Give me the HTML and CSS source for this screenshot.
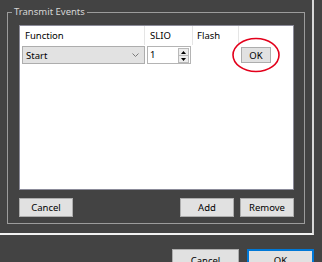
FILE: index.html
```html
<html>
<head>
    <title>Transmit Events</title>
    <link rel="stylesheet" href="styles.css">
</head>
<body>
    <div class="panel">
        <fieldset class="group">
            <legend>Transmit Events</legend>

            <!-- event list -->
            <div class="list">
                <div class="list-head">
                    <div class="col col-func">Function</div>
                    <div class="col col-slio">SLIO</div>
                    <div class="col col-flash">Flash</div>
                    <div class="col col-rest"></div>
                </div>
                <div class="list-row">
                    <div class="combo">
                        <span>Start</span>
                        <svg class="chevron" width="7" height="4" viewBox="0 0 7 4"><polyline points="0.5,0.5 3.5,3.5 6.5,0.5" fill="none" stroke="#7a7a7a" stroke-width="1"/></svg>
                    </div>
                    <div class="spin">
                        <span class="spin-value">1</span>
                        <div class="spin-btns">
                            <div class="spin-btn"><svg width="5" height="3" viewBox="0 0 5 3"><polygon points="2.5,0 5,3 0,3" fill="#000"/></svg></div>
                            <div class="spin-btn"><svg width="5" height="3" viewBox="0 0 5 3"><polygon points="0,0 5,0 2.5,3" fill="#000"/></svg></div>
                        </div>
                    </div>
                    <div class="cell-ok">
                        <button class="btn btn-ok">OK</button>
                        <svg class="mark" width="50" height="36" viewBox="0 0 50 36"><ellipse cx="25" cy="18" rx="23" ry="16.5" fill="none" stroke="#e3001b" stroke-width="1.6"/></svg>
                    </div>
                </div>
            </div>

            <div class="group-actions">
                <button class="btn">Cancel</button>
                <span class="spacer"></span>
                <button class="btn">Add</button>
                <button class="btn">Remove</button>
            </div>
        </fieldset>
    </div>

    <div class="footer">
        <button class="btn btn-dialog">Cancel</button>
        <button class="btn btn-dialog btn-default">OK</button>
    </div>
</body>
</html>
```

FILE: styles.css
```css
body {
    margin: 0;
    background-color: #434343;
    font-family: "Noto Sans", "Open Sans", sans-serif;
    font-size: 9.5px;
    width: 322px;
    height: 262px;
    overflow: hidden;
}

.panel {
    width: 312px;
    height: 233px;
    border-right: 2px solid #d8d8d8;
    border-bottom: 2px solid #f2f2f2;
    overflow: hidden;
}

.group {
    box-sizing: border-box;
    width: 298px;
    height: 219px;
    margin: 5px 0 0 7px;
    padding: 6px 10px 6px 11px;
    border: 1px solid #9c9c9c;
    min-width: 0;
}

.group legend {
    margin-left: -7px;
    padding: 0 2px;
    line-height: 14px;
    color: #d6d6d6;
}

.list {
    height: 165px;
    box-sizing: border-box;
    background-color: #fff;
    border: 1px solid #8b8b99;
}

.list-head {
    display: flex;
    height: 19px;
}

.col {
    box-sizing: border-box;
    padding-left: 5px;
    line-height: 19px;
    color: #000;
    border-right: 1px solid #e5e5e5;
}

.col-func {
    width: 125px;
}

.col-slio {
    width: 48px;
}

.col-flash {
    width: 46px;
    padding-left: 4px;
}

.col-rest {
    flex: 1;
    border-right: none;
}

.list-row {
    display: flex;
    align-items: flex-start;
    padding: 1px 0 0 2px;
}

.combo {
    box-sizing: border-box;
    width: 123px;
    height: 18px;
    display: flex;
    align-items: center;
    justify-content: space-between;
    padding: 0 5px 0 3px;
    background-color: #e2e2e2;
    border: 1px solid #adadad;
    color: #000;
}

.spin {
    box-sizing: border-box;
    width: 44px;
    height: 18px;
    margin-left: 2px;
    display: flex;
    background-color: #fff;
    border: 1px solid #b4b4b4;
}

.spin-value {
    flex: 1;
    padding-left: 2px;
    line-height: 16px;
    color: #000;
}

.spin-btns {
    width: 11px;
    display: flex;
    flex-direction: column;
    padding: 1px 1px 1px 0;
    gap: 0;
}

.spin-btn {
    flex: 1;
    display: flex;
    align-items: center;
    justify-content: center;
    background-color: #ececec;
    border: 1px solid #b9b9b9;
    margin-bottom: -1px;
}

.cell-ok {
    position: relative;
    margin: 1px 0 0 50px;
}

.btn {
    box-sizing: border-box;
    margin: 0;
    padding: 0;
    font-family: inherit;
    font-size: 9.5px;
    color: #000;
    background-color: #e1e1e1;
    border: 1px solid #adadad;
    border-radius: 0;
}

.btn-ok {
    display: block;
    width: 30px;
    height: 16px;
}

.mark {
    position: absolute;
    left: -10px;
    top: -10px;
}

.group-actions {
    display: flex;
    gap: 6px;
    margin-top: 8px;
}

.group-actions .btn {
    width: 54px;
    height: 19px;
}

.spacer {
    flex: 1;
}

.footer {
    display: flex;
    justify-content: flex-end;
    gap: 8px;
    padding: 14px 8px 0 0;
}

.btn-dialog {
    width: 67px;
    height: 23px;
}

.btn-default {
    border: 2px solid #0078d7;
}
```
